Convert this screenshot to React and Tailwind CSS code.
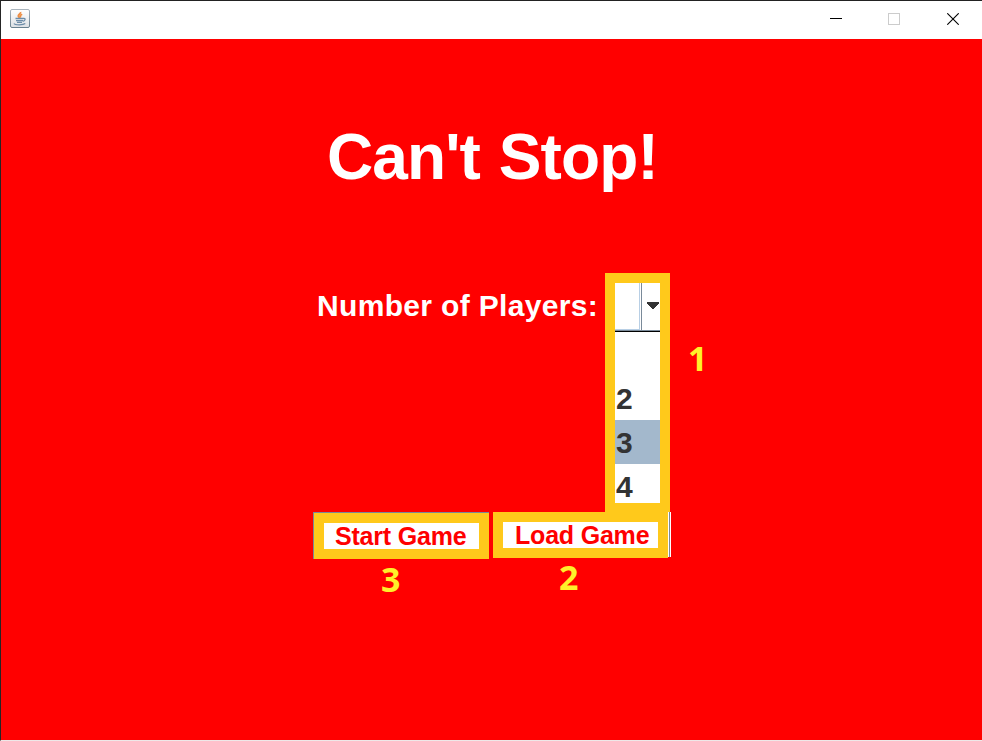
function JavaIcon() {
  return (
    <svg width="20" height="19" viewBox="0 0 20 19" fill="none">
      <defs>
        <linearGradient id="tile" x1="0" y1="0" x2="0" y2="1">
          <stop offset="0" stopColor="#ffffff" />
          <stop offset="1" stopColor="#dce0e4" />
        </linearGradient>
        <linearGradient id="rim" x1="0" y1="0" x2="0" y2="1">
          <stop offset="0" stopColor="#a9b4bd" />
          <stop offset="1" stopColor="#68808f" />
        </linearGradient>
      </defs>
      <rect x="0.5" y="0.5" width="19" height="18" rx="1.5" fill="url(#tile)" stroke="url(#rim)" />
      <path d="M10.6 3C11 5 7.6 5.6 8.3 7.4L9.6 9M12.2 5.2C10 6.2 10 7 10.8 8.5" stroke="#ee8d43" strokeWidth="1.7" />
      <path d="M5.5 9.5H13M6 11.6H13M7 13.4H12M13 9.5C16 8.8 15.6 11.8 12.8 12.3M4 14.5C5 16.3 13 16.3 15.3 14.6" stroke="#6c8ca8" strokeWidth="1.3" />
    </svg>
  );
}

function TitleBar() {
  return (
    <header className="flex h-[38px] shrink-0 bg-white pl-[9px]">
      <div className="pt-2">
        <JavaIcon />
      </div>
      <div className="ml-auto flex pt-3">
        <svg className="mr-[46px]" width="12" height="12" shapeRendering="crispEdges">
          <path d="M0 5.5H12" stroke="#000" />
        </svg>
        <svg className="mr-[47px]" width="12" height="12" shapeRendering="crispEdges">
          <rect x="0.5" y="0.5" width="11" height="11" fill="none" stroke="#ccc" />
        </svg>
        <svg className="mr-[23px]" width="12" height="12">
          <path d="M0.3 0.3L11.7 11.7M11.7 0.3L0.3 11.7" stroke="#000" strokeWidth="1.1" />
        </svg>
      </div>
    </header>
  );
}

function PlayerSelect() {
  return (
    <div className="h-[239px] w-[65px] border-[10px] border-b-[9px] border-[#ffc91b] bg-white text-[30px] font-bold text-[#333]">
      <div className="h-[49px] border-b border-black bg-white">
        <div className="flex h-[48px] border-b border-[#7a8a99]">
          <div className="w-[25px] border-r border-b border-[#b8cfe5]" />
          <div className="w-px" />
          <div className="flex flex-1 border-l border-[#7a8a99] pt-[19px] pl-[5px]">
            <svg width="12" height="7" className="shrink-0" shapeRendering="crispEdges">
              <path d="M0 0H12V1L6.5 7H5.5L0 1Z" fill="#333" />
            </svg>
          </div>
        </div>
      </div>
      <div className="h-11" />
      <div className="h-11 pl-px leading-[45px]">2</div>
      <div className="h-11 bg-[#a3b8cc] pl-px leading-[45px]">3</div>
      <div className="h-[39px] pl-px leading-[45px]">4</div>
    </div>
  );
}

function Note({ children, className }) {
  return (
    <div className={`font-['Open_Sans','Noto_Sans',sans-serif] text-[34px] leading-[34px] font-bold text-[#fff02a] ${className}`}>
      {children}
    </div>
  );
}

export default function App() {
  return (
    <div className="flex h-[741px] w-[982px] flex-col overflow-hidden border-t border-b border-l border-t-[#222] border-b-[#eee8e8] border-l-[#252525] bg-[#f00] font-['Liberation_Sans',Arial,sans-serif]">
      <TitleBar />
      <main className="flex flex-1 flex-col">
        <h1 className="mt-[81px] h-[153px] pl-[326px] text-[64px] leading-[74px] font-bold tracking-[-0.9px] [word-spacing:2px] whitespace-nowrap text-white">
          Can't Stop!
        </h1>
        <div className="flex h-[239px] pl-[314px]">
          <div className="w-[290px] pt-[15px] pl-[2px] text-[30px] leading-[35px] font-bold tracking-[0.33px] whitespace-nowrap text-white">
            Number of Players:
          </div>
          <PlayerSelect />
          <Note className="mt-[68px] ml-[18px]">1</Note>
        </div>
        <div className="flex pl-[312px] text-[25px] font-bold tracking-[-0.2px] text-[#f00]">
          <div className="mr-1 h-[47px] w-[176px] border-t border-l border-[#7a8a99]">
            <button className="block h-[46px] w-[175px] border-10 border-[#ffc91b] bg-white pl-[11px] text-left leading-[26px] whitespace-nowrap">
              Start Game
            </button>
          </div>
          <button className="block h-[46px] w-[175px] border-10 border-[#ffc91b] bg-white pl-[12px] text-left leading-[26px] whitespace-nowrap">
            Load Game
          </button>
          <div className="h-[45px] w-[3px] border-x border-white bg-[#7a8a99]" />
        </div>
        <div className="flex pl-[380px]">
          <Note className="mt-[3px] w-[178px]">3</Note>
          <Note className="mt-[1px]">2</Note>
        </div>
      </main>
    </div>
  );
}
